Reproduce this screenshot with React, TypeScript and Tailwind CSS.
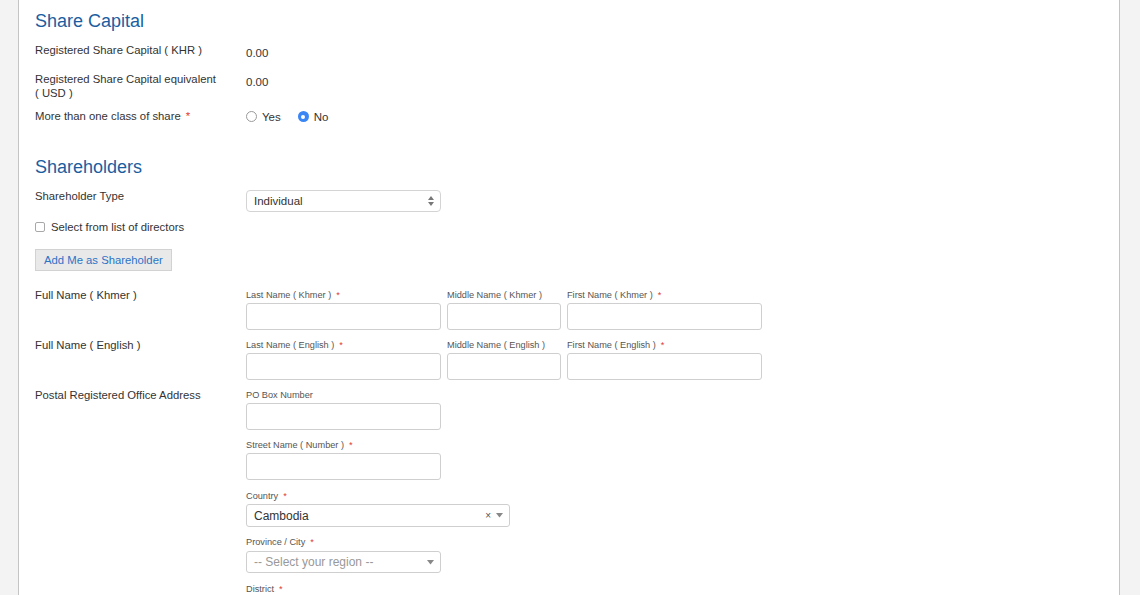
import React from 'react';

const Req = () => <span className="ml-[5px] text-[#e0392f]">*</span>;

const SmallLabel = ({ text, required }: { text: string; required?: boolean }) => (
  <div className="h-[14px] text-[9.2px] leading-[14px] text-[#555]">
    {text}
    {required && <Req />}
  </div>
);

const TextBox = ({ w }: { w: string }) => (
  <div className={`${w} mt-[1px] h-[27px] rounded-[3px] border border-[#cfcfcf] bg-white`} />
);

const Field = ({ label, required, w }: { label: string; required?: boolean; w: string }) => (
  <div className="flex flex-col">
    <SmallLabel text={label} required={required} />
    <TextBox w={w} />
  </div>
);

const Caret = () => (
  <svg width="7" height="5" viewBox="0 0 7 5">
    <path d="M0 0 H7 L3.5 4.5 Z" fill="#888" />
  </svg>
);

const App: React.FC = () => {
  return (
    <div className="flex h-[595px] w-[1140px] overflow-hidden bg-[#f3f3f3] pl-[18px] pr-[20px] font-['Liberation_Sans',Arial,sans-serif] text-[11.3px] leading-[14px] text-[#333]">
      <div className="flex-1 border-x border-[#c4c4c4] bg-white px-[16px] pt-[11px]">
        <h2 className="text-[18px] leading-[20px] text-[#1a5e9f]">Share Capital</h2>

        <div className="mt-[12px] flex h-[29px] items-start">
          <div className="w-[211px]">Registered Share Capital ( KHR )</div>
          <div className="pt-[3px] text-[11.5px]">0.00</div>
        </div>
        <div className="flex h-[37px] items-start">
          <div className="w-[211px]">
            Registered Share Capital equivalent
            <br />( USD )
          </div>
          <div className="pt-[3px] text-[11.5px]">0.00</div>
        </div>
        <div className="flex h-[48px] items-start">
          <div className="w-[211px]">
            More than one class of share
            <Req />
          </div>
          <div className="flex h-[14px] items-center gap-[5px] pt-[1px]">
            <span className="h-[11px] w-[11px] rounded-full border border-[#9a9a9a] bg-white" />
            <span className="text-[11.5px]">Yes</span>
            <span className="ml-[12px] flex h-[11px] w-[11px] items-center justify-center rounded-full bg-[#3b86f5]">
              <span className="h-[4px] w-[4px] rounded-full bg-white" />
            </span>
            <span className="text-[11.5px]">No</span>
          </div>
        </div>

        <h2 className="text-[18px] leading-[20px] text-[#1a5e9f]">Shareholders</h2>

        <div className="mt-[12px] flex items-start">
          <div className="w-[211px]">Shareholder Type</div>
          <div className="mt-[1px] flex h-[22px] w-[195px] items-center justify-between rounded-[4px] border border-[#d4d4d4] bg-white pl-[7px] pr-[6px] text-[11.5px]">
            <span>Individual</span>
            <svg width="6" height="10" viewBox="0 0 6 10">
              <path d="M0 4 L3 0 L6 4 Z M0 6 L3 10 L6 6 Z" fill="#777" />
            </svg>
          </div>
        </div>

        <div className="mt-[8px] flex items-center gap-[6px]">
          <span className="h-[10px] w-[10px] rounded-[2px] border border-[#a8a8a8] bg-white" />
          <span>Select from list of directors</span>
        </div>

        <button className="mt-[15px] flex h-[22px] items-center border border-[#d2d2d2] bg-[#e9e9e9] px-[8px] text-[11.3px] text-[#2c73c6]">
          Add Me as Shareholder
        </button>

        <div className="mt-[17px] flex items-start">
          <div className="w-[211px]">Full Name ( Khmer )</div>
          <div className="flex gap-[6px]">
            <Field label="Last Name ( Khmer )" required w="w-[195px]" />
            <Field label="Middle Name ( Khmer )" w="w-[114px]" />
            <Field label="First Name ( Khmer )" required w="w-[195px]" />
          </div>
        </div>

        <div className="mt-[8px] flex items-start">
          <div className="w-[211px]">Full Name ( English )</div>
          <div className="flex gap-[6px]">
            <Field label="Last Name ( English )" required w="w-[195px]" />
            <Field label="Middle Name ( English )" w="w-[114px]" />
            <Field label="First Name ( English )" required w="w-[195px]" />
          </div>
        </div>

        <div className="mt-[8px] flex items-start">
          <div className="w-[211px]">Postal Registered Office Address</div>
          <div className="flex flex-col">
            <Field label="PO Box Number" w="w-[195px]" />
            <div className="mt-[8px]">
              <Field label="Street Name ( Number )" required w="w-[195px]" />
            </div>
            <div className="mt-[9px]">
              <SmallLabel text="Country" required />
              <div className="mt-[1px] flex h-[23px] w-[264px] items-center justify-between rounded-[3px] border border-[#cfcfcf] bg-white pl-[7px] pr-[6px]">
                <span className="text-[12px] text-[#333]">Cambodia</span>
                <span className="flex items-center gap-[5px]">
                  <span className="text-[10px] leading-none text-[#555]">×</span>
                  <Caret />
                </span>
              </div>
            </div>
            <div className="mt-[8px]">
              <SmallLabel text="Province / City" required />
              <div className="mt-[2px] flex h-[22px] w-[195px] items-center justify-between rounded-[3px] border border-[#cfcfcf] bg-white pl-[7px] pr-[6px]">
                <span className="text-[12px] text-[#999]">-- Select your region --</span>
                <Caret />
              </div>
            </div>
            <div className="mt-[9px]">
              <SmallLabel text="District" required />
            </div>
          </div>
        </div>
      </div>
    </div>
  );
};

export default App;
